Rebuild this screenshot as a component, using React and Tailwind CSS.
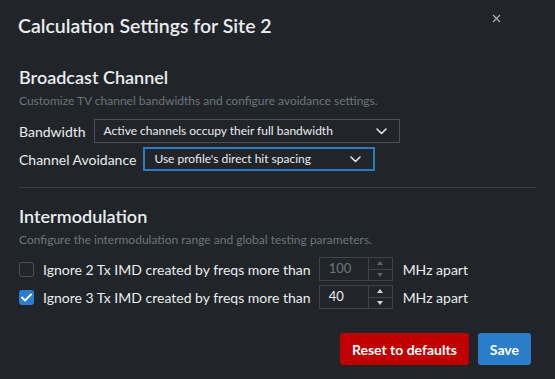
import { useState } from "react";

function Chevron() {
  return (
    <svg width="11" height="7" viewBox="0 0 11 7" fill="none" className="shrink-0">
      <path d="M1 1l4.5 4.5L10 1" stroke="#dee2e6" strokeWidth="1.6" strokeLinecap="round" strokeLinejoin="round" />
    </svg>
  );
}

function Select({ value, width, active }) {
  return (
    <div
      className={`flex items-center justify-between h-[24px] pl-[9px] pr-[12px] text-[12px] text-[#e9ecef] ${width} ${
        active ? "border-2 border-[#2a7bc4]" : "border border-[#495057]"
      }`}
    >
      <span>{value}</span>
      <Chevron />
    </div>
  );
}

function NumberInput({ value, disabled }) {
  return (
    <div className="flex h-[24px] w-[74px] border border-[#3e444a]">
      <div className={`flex-1 flex items-center pl-[9px] text-[13px] ${disabled ? "text-[#6c757d]" : "text-[#e9ecef]"}`}>
        {value}
      </div>
      <div className="w-[24px] flex flex-col border-l border-[#3e444a]">
        <div className="flex-1 flex items-center justify-center border-b border-[#3e444a]">
          <svg width="6" height="4" viewBox="0 0 6 4">
            <path d="M0 4L3 0L6 4Z" fill={disabled ? "#5c636a" : "#ced4da"} />
          </svg>
        </div>
        <div className="flex-1 flex items-center justify-center">
          <svg width="6" height="4" viewBox="0 0 6 4">
            <path d="M0 0L6 0L3 4Z" fill={disabled ? "#5c636a" : "#ced4da"} />
          </svg>
        </div>
      </div>
    </div>
  );
}

function CheckRow({ checked, label, value, disabled }) {
  return (
    <div className="flex items-center h-[24px]">
      <div
        className={`w-[15px] h-[15px] rounded-[3px] flex items-center justify-center ${
          checked ? "bg-[#2b7cd3]" : "border border-[#495057]"
        }`}
      >
        {checked && (
          <svg width="11" height="9" viewBox="0 0 11 9" fill="none">
            <path d="M1 4.5L4 7.5L10 1.5" stroke="white" strokeWidth="1.8" strokeLinecap="round" strokeLinejoin="round" />
          </svg>
        )}
      </div>
      <span className="ml-[9px] text-[14px] text-[#e9ecef]">{label}</span>
      <div className="ml-[8px]">
        <NumberInput value={value} disabled={disabled} />
      </div>
      <span className="ml-[10px] text-[14px] text-[#e9ecef]">MHz apart</span>
    </div>
  );
}

export default function App() {
  const [open] = useState(true);
  if (!open) return null;

  return (
    <div className="w-[555px] h-[379px] bg-[#212529] px-[18px] font-['Lato',sans-serif] overflow-hidden">
      <div className="flex justify-between items-start pt-[13px]">
        <h1 className="text-[19.5px] leading-[26px] font-semibold text-[#e9ecef]">
          Calculation Settings for Site 2
        </h1>
        <button className="mt-[1px] mr-[36px] text-[#adb5bd]">
          <svg width="9" height="9" viewBox="0 0 9 9">
            <path d="M1 1l7 7M8 1l-7 7" stroke="#adb5bd" strokeWidth="1.1" />
          </svg>
        </button>
      </div>

      <div className="mt-[26px] px-px">
        <h2 className="text-[18px] leading-[24px] font-semibold text-[#e9ecef]">Broadcast Channel</h2>
        <p className="mt-[4px] text-[12px] leading-[16px] text-[#6c757d]">
          Customize TV channel bandwidths and configure avoidance settings.
        </p>
        <div className="mt-[10px] flex items-center gap-[8px]">
          <span className="text-[14px] text-[#e9ecef]">Bandwidth</span>
          <Select value="Active channels occupy their full bandwidth" width="w-[306px]" />
        </div>
        <div className="mt-[4px] flex items-center gap-[7px]">
          <span className="text-[14px] text-[#e9ecef]">Channel Avoidance</span>
          <Select value="Use profile's direct hit spacing" width="w-[232px]" active />
        </div>
      </div>

      <div className="mt-[16px] mx-px h-px bg-[#3a3f44]" />

      <div className="mt-[16px] px-px">
        <h2 className="text-[18px] leading-[24px] font-semibold text-[#e9ecef]">Intermodulation</h2>
        <p className="mt-[4px] text-[12px] leading-[16px] text-[#6c757d]">
          Configure the intermodulation range and global testing parameters.
        </p>
        <div className="mt-[9px] flex flex-col gap-[4px]">
          <CheckRow label="Ignore 2 Tx IMD created by freqs more than" value="100" disabled />
          <CheckRow checked label="Ignore 3 Tx IMD created by freqs more than" value="40" />
        </div>
      </div>

      <div className="mt-[24px] flex justify-end gap-[9px] pr-[6px]">
        <button className="h-[32px] px-[12px] rounded-[3px] bg-[#c00000] text-white text-[14px] font-bold">
          Reset to defaults
        </button>
        <button className="h-[32px] px-[12px] rounded-[3px] bg-[#2b7cc9] text-white text-[14px] font-bold">
          Save
        </button>
      </div>
    </div>
  );
}
